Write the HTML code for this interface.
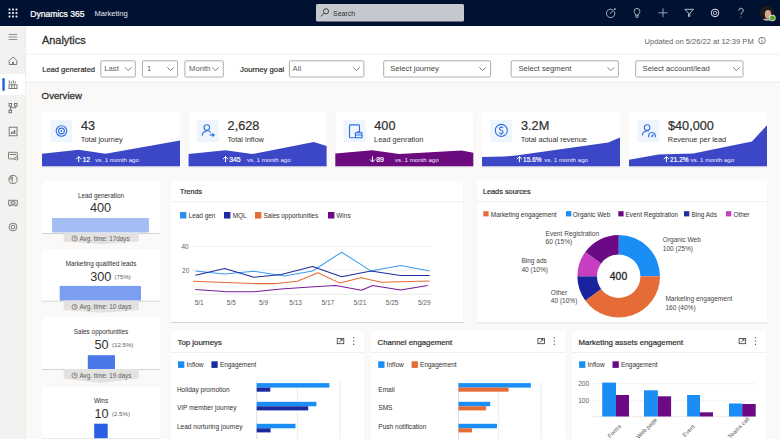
<!DOCTYPE html><html><head><meta charset="utf-8"><style>html,body{margin:0;padding:0;background:#faf9f8;overflow:hidden}svg{display:block;font-family:"Liberation Sans", sans-serif}</style></head><body>
<svg width="780" height="439" viewBox="0 0 780 439">
<defs><filter id="sh" x="-10%" y="-10%" width="120%" height="130%"><feDropShadow dx="0" dy="0.7" stdDeviation="0.55" flood-color="#000" flood-opacity="0.22"/></filter></defs>
<rect x="0" y="0" width="780" height="439" fill="#faf9f8"/>
<rect x="0" y="0" width="780" height="26" fill="#001131"/>
<rect x="8.6" y="8.6" width="1.8" height="1.8" fill="#fff"/>
<rect x="8.6" y="12.1" width="1.8" height="1.8" fill="#fff"/>
<rect x="8.6" y="15.6" width="1.8" height="1.8" fill="#fff"/>
<rect x="12.1" y="8.6" width="1.8" height="1.8" fill="#fff"/>
<rect x="12.1" y="12.1" width="1.8" height="1.8" fill="#fff"/>
<rect x="12.1" y="15.6" width="1.8" height="1.8" fill="#fff"/>
<rect x="15.6" y="8.6" width="1.8" height="1.8" fill="#fff"/>
<rect x="15.6" y="12.1" width="1.8" height="1.8" fill="#fff"/>
<rect x="15.6" y="15.6" width="1.8" height="1.8" fill="#fff"/>
<text x="30.2" y="16.6" font-size="8.6" fill="#fff" stroke="#fff" stroke-width="0.241" text-anchor="start" >Dynamics 365</text>
<text x="94.4" y="16.4" font-size="7.6" fill="#e8e8ee" font-weight="400" text-anchor="start" >Marketing</text>
<rect x="316" y="4" width="148" height="17.5" rx="1.5" fill="#c5c8cf"/>
<circle cx="326" cy="11.3" r="2.6" fill="none" stroke="#323130" stroke-width="0.9"/><line x1="324.1" y1="13.2" x2="320.9" y2="16.4" stroke="#323130" stroke-width="0.9"/>
<text x="333" y="15.6" font-size="7.0" fill="#323130" font-weight="400" text-anchor="start" >Search</text>
<path d="M614.3 11.4 A4.2 4.2 0 1 1 612.6 9.7" fill="none" stroke="#dfe2ea" stroke-width="0.75"/><line x1="609.8" y1="13.6" x2="614.9" y2="9.1" fill="none" stroke="#dfe2ea" stroke-width="0.75"/><circle cx="615" cy="9" r="0.8" fill="#dfe2ea"/>
<path d="M634.1 11.3 a2.9 2.9 0 1 1 5.8 0 c0 1.6 -1.3 2.3 -1.6 3.8 h-2.6 c-0.3 -1.5 -1.6 -2.2 -1.6 -3.8 z" fill="none" stroke="#dfe2ea" stroke-width="0.75"/><path d="M635.9 15.1 v1.8 q0 0.5 0.5 0.5 h1.2 q0.5 0 0.5 -0.5 v-1.8" fill="none" stroke="#dfe2ea" stroke-width="0.75"/>
<line x1="658.5" y1="12.8" x2="667.5" y2="12.8" stroke="#9aa0b4" stroke-width="1"/><line x1="663" y1="8.4" x2="663" y2="17.2" stroke="#9aa0b4" stroke-width="1"/>
<path d="M684.9 9.3 H693.5 L689.9 13.2 V16.4 H688.5 V13.2 Z" fill="none" stroke="#e6e8ee" stroke-width="0.8" stroke-linejoin="round"/>
<circle cx="715" cy="12.9" r="3.8" fill="none" stroke="#dfe2ea" stroke-width="1"/><circle cx="715" cy="12.9" r="1.7" fill="none" stroke="#dfe2ea" stroke-width="0.8"/>
<path d="M738.8 10.6 c0-3 4.4-3 4.4 -0.2 c0 1.8 -2.2 2 -2.2 4" fill="none" stroke="#e6e8ee" stroke-width="0.9"/><circle cx="741" cy="17" r="0.5" fill="#e6e8ee"/>
<defs><clipPath id="av"><circle cx="767" cy="13.3" r="7.4"/></clipPath></defs><g clip-path="url(#av)"><rect x="759" y="5" width="16" height="17" fill="#1f1a19"/><ellipse cx="768" cy="14.2" rx="3.2" ry="4.3" fill="#d4a592"/><path d="M764.5 12 q2 -4 6 -2.5 q-1 -2.5 -3.5 -2.5 q-3 0.5 -2.5 5z" fill="#1f1a19"/><ellipse cx="767" cy="21.3" rx="5.5" ry="2.8" fill="#b9b6b8"/></g><circle cx="772.3" cy="18" r="3.3" fill="#e8e8e8"/><circle cx="772.3" cy="18" r="2.5" fill="#52a82a"/>
<rect x="0" y="26" width="25.6" height="413" fill="#f3f2f1"/>
<rect x="25.3" y="26" width="0.6" height="413" fill="#e4e2e0"/>
<rect x="0" y="74" width="25.3" height="21" fill="#ffffff"/>
<rect x="2.3" y="78" width="2.5" height="13" rx="1.2" fill="#2266e3"/>
<line x1="8.6" y1="34.5" x2="17.2" y2="34.5" stroke="#8a8886" stroke-width="0.9"/>
<line x1="8.6" y1="37" x2="17.2" y2="37" stroke="#8a8886" stroke-width="0.9"/>
<line x1="8.6" y1="39.5" x2="17.2" y2="39.5" stroke="#8a8886" stroke-width="0.9"/>
<path d="M9.2 60.5 L13 57 L16.8 60.5 V64.5 H9.2 Z" fill="none" stroke="#605e5c" stroke-width="0.8"/><rect x="12.2" y="61.8" width="1.6" height="2.7" fill="#605e5c"/>
<path d="M9.3 80.3 v3.3 M11.3 81.3 v2.3 M13.3 80.3 v3.3 M15.3 81.3 v2.3" fill="none" stroke="#605e5c" stroke-width="0.8"/><rect x="9" y="84.8" width="8" height="3.8" fill="none" stroke="#605e5c" stroke-width="0.8"/><line x1="11.7" y1="84.8" x2="11.7" y2="88.6" fill="none" stroke="#605e5c" stroke-width="0.8"/><line x1="14.3" y1="84.8" x2="14.3" y2="88.6" fill="none" stroke="#605e5c" stroke-width="0.8"/>
<rect x="9" y="103.5" width="2.6" height="2.6" fill="none" stroke="#605e5c" stroke-width="0.8"/><rect x="14.4" y="103.5" width="2.6" height="2.6" fill="none" stroke="#605e5c" stroke-width="0.8"/><rect x="9" y="110.2" width="2.6" height="2.6" fill="none" stroke="#605e5c" stroke-width="0.8"/><path d="M10.3 106.1 v4.1 M15.7 106.1 v1.6 h-5.4" fill="none" stroke="#605e5c" stroke-width="0.8"/>
<rect x="9.2" y="127.2" width="7.8" height="8.6" fill="none" stroke="#605e5c" stroke-width="0.8"/><path d="M11.5 134 v-2 M13.1 134 v-3 M14.7 134 v-4" stroke="#605e5c" stroke-width="1"/>
<rect x="8.5" y="152.3" width="8.8" height="6.6" rx="0.6" fill="none" stroke="#605e5c" stroke-width="0.8"/><line x1="9.8" y1="154.5" x2="16" y2="154.5" fill="none" stroke="#605e5c" stroke-width="0.8"/><circle cx="16.3" cy="158.5" r="1.5" fill="#f3f2f1" stroke="#605e5c" stroke-width="0.8"/>
<circle cx="13" cy="179.5" r="4.1" fill="none" stroke="#605e5c" stroke-width="0.8"/><path d="M11.5 175.8 q1.6 1.6 0.8 3.4 q-0.8 1.6 0.6 3 M9.2 179 q1.5 -0.5 3 0.2" fill="none" stroke="#605e5c" stroke-width="0.8"/><path d="M13 175.4 a4.1 4.1 0 0 0 -3.9 3.2 q1.7 -0.3 3.2 0.4 q0.6 -1.8 -0.6 -3.4z" fill="#a19f9d"/>
<path d="M8.7 200.3 h8.6 v4.9 h-1.4 v1.4 M8.7 200.3 v4.9 h1.4 v1.4 M10.1 205.2 h5.8" fill="none" stroke="#605e5c" stroke-width="0.8"/><path d="M11 201.8 h4 v1.8 q-2 1.4 -4 0 z" fill="none" stroke="#605e5c" stroke-width="0.8"/>
<circle cx="13" cy="227" r="3.9" fill="none" stroke="#605e5c" stroke-width="0.8"/><circle cx="13" cy="227" r="1.9" fill="none" stroke="#605e5c" stroke-width="0.8"/>
<rect x="26" y="26" width="754" height="56" fill="#ffffff"/>
<rect x="26" y="53.8" width="754" height="0.8" fill="#edebe9"/>
<rect x="26" y="81.6" width="754" height="0.8" fill="#e8e6e4"/>
<text x="42.0" y="44.3" font-size="10.9" fill="#323130" stroke="#323130" stroke-width="0.305" text-anchor="start" >Analytics</text>
<text x="644.6" y="43.8" font-size="7.55" fill="#605e5c" font-weight="400" text-anchor="start" >Updated on 5/26/22 at 12:39 PM</text>
<circle cx="762" cy="40.6" r="3.3" fill="none" stroke="#605e5c" stroke-width="0.8"/><line x1="762" y1="39.8" x2="762" y2="42.6" stroke="#605e5c" stroke-width="0.8"/><circle cx="762" cy="38.5" r="0.45" fill="#605e5c"/>
<text x="42.2" y="71.6" font-size="7.55" fill="#323130" stroke="#323130" stroke-width="0.211" text-anchor="start" >Lead generated</text>
<text x="240.1" y="71.6" font-size="7.7" fill="#323130" stroke="#323130" stroke-width="0.216" text-anchor="start" >Journey goal</text>
<rect x="100.80000000000001" y="60.8" width="34.499999999999986" height="16.2" rx="1.2" fill="#fff" stroke="#a19f9d" stroke-width="0.85"/>
<text x="104.3" y="71.4" font-size="7.7" fill="#605e5c" font-weight="400" text-anchor="start" >Last</text>
<path d="M124.89999999999999 67.3 L128.2 70.6 L131.5 67.3" fill="none" stroke="#605e5c" stroke-width="0.8"/>
<rect x="142.4" y="60.8" width="35.2" height="16.2" rx="1.2" fill="#fff" stroke="#a19f9d" stroke-width="0.85"/>
<text x="147.0" y="71.4" font-size="7.7" fill="#605e5c" font-weight="400" text-anchor="start" >1</text>
<path d="M167.29999999999998 67.3 L170.6 70.6 L173.9 67.3" fill="none" stroke="#605e5c" stroke-width="0.8"/>
<rect x="184.9" y="60.8" width="38.39999999999999" height="16.2" rx="1.2" fill="#fff" stroke="#a19f9d" stroke-width="0.85"/>
<text x="189.0" y="71.4" font-size="7.7" fill="#605e5c" font-weight="400" text-anchor="start" >Month</text>
<path d="M212.0 67.3 L215.3 70.6 L218.60000000000002 67.3" fill="none" stroke="#605e5c" stroke-width="0.8"/>
<rect x="289.4" y="60.8" width="74.50000000000001" height="16.2" rx="1.2" fill="#fff" stroke="#a19f9d" stroke-width="0.85"/>
<text x="292.6" y="71.4" font-size="7.7" fill="#605e5c" font-weight="400" text-anchor="start" >All</text>
<path d="M353.09999999999997 67.3 L356.4 70.6 L359.7 67.3" fill="none" stroke="#605e5c" stroke-width="0.8"/>
<rect x="383.7" y="60.8" width="106.89999999999999" height="16.2" rx="1.2" fill="#fff" stroke="#a19f9d" stroke-width="0.85"/>
<text x="390.2" y="71.4" font-size="7.7" fill="#484644" font-weight="400" text-anchor="start" >Select journey</text>
<path d="M479.3 67.3 L482.6 70.6 L485.90000000000003 67.3" fill="none" stroke="#605e5c" stroke-width="0.8"/>
<rect x="511.2" y="60.8" width="107.19999999999995" height="16.2" rx="1.2" fill="#fff" stroke="#a19f9d" stroke-width="0.85"/>
<text x="518.4" y="71.4" font-size="7.7" fill="#484644" font-weight="400" text-anchor="start" >Select segment</text>
<path d="M607.5 67.3 L610.8 70.6 L614.0999999999999 67.3" fill="none" stroke="#605e5c" stroke-width="0.8"/>
<rect x="635.6999999999999" y="60.8" width="107.30000000000003" height="16.2" rx="1.2" fill="#fff" stroke="#a19f9d" stroke-width="0.85"/>
<text x="642.6" y="71.4" font-size="7.7" fill="#484644" font-weight="400" text-anchor="start" >Select account/lead</text>
<path d="M733.2 67.3 L736.5 70.6 L739.8 67.3" fill="none" stroke="#605e5c" stroke-width="0.8"/>
<text x="41.6" y="99.2" font-size="9.7" fill="#323130" stroke="#323130" stroke-width="0.272" text-anchor="start" >Overview</text>
<rect x="42" y="112" width="138" height="54.3" fill="#fff" filter="url(#sh)"/>
<rect x="50.3" y="120" width="22" height="22" fill="#eff5fd"/>
<polygon points="42.0,166.3 42.0,153.7 78.7,149.7 105.5,153.7 180.0,140.4 180.0,166.3" fill="#3b47c6"/>
<text x="81.0" y="130.3" font-size="12.7" fill="#323130" stroke="#323130" stroke-width="0.229" text-anchor="start" >43</text>
<text x="80.8" y="141.8" font-size="7.4" fill="#323130" font-weight="400" text-anchor="start" >Total journey</text>
<path d="M78.7 162.2 V156.6 M76.10000000000001 159.2 L78.7 156.6 L81.3 159.2" fill="none" stroke="#fff" stroke-width="1"/>
<text x="82.4" y="161.8" font-size="6.9" fill="#fff" stroke="#fff" stroke-width="0.193" text-anchor="start" >12</text>
<text x="95.2" y="161.8" font-size="6.15" fill="#eef0ff" font-weight="400" text-anchor="start" >vs. 1 month ago</text>
<rect x="188.6" y="112" width="138" height="54.3" fill="#fff" filter="url(#sh)"/>
<rect x="196.9" y="120" width="22" height="22" fill="#eff5fd"/>
<polygon points="188.6,166.3 188.6,154 225.4,150.2 252.3,154 313.8,141.9 326.6,146 326.6,166.3" fill="#3b47c6"/>
<text x="227.6" y="130.3" font-size="12.7" fill="#323130" stroke="#323130" stroke-width="0.229" text-anchor="start" >2,628</text>
<text x="227.39999999999998" y="141.8" font-size="7.4" fill="#323130" font-weight="400" text-anchor="start" >Total inflow</text>
<path d="M225.5 162.2 V156.6 M222.9 159.2 L225.5 156.6 L228.1 159.2" fill="none" stroke="#fff" stroke-width="1"/>
<text x="229.2" y="161.8" font-size="6.9" fill="#fff" stroke="#fff" stroke-width="0.193" text-anchor="start" >345</text>
<text x="247" y="161.8" font-size="6.15" fill="#eef0ff" font-weight="400" text-anchor="start" >vs. 1 month ago</text>
<rect x="335.3" y="112" width="138" height="54.3" fill="#fff" filter="url(#sh)"/>
<rect x="343.6" y="120" width="22" height="22" fill="#eff5fd"/>
<polygon points="335.3,166.3 335.3,153.5 372.3,150.2 399.2,154 461.7,150.6 473.3,152.7 473.3,166.3" fill="#6c0a80"/>
<text x="374.3" y="130.3" font-size="12.7" fill="#323130" stroke="#323130" stroke-width="0.229" text-anchor="start" >400</text>
<text x="374.1" y="141.8" font-size="7.4" fill="#323130" font-weight="400" text-anchor="start" >Lead genration</text>
<path d="M372.5 156.4 V162 M369.9 159.4 L372.5 162 L375.1 159.4" fill="none" stroke="#fff" stroke-width="1"/>
<text x="376.2" y="161.8" font-size="6.9" fill="#fff" stroke="#fff" stroke-width="0.193" text-anchor="start" >89</text>
<text x="395" y="161.8" font-size="6.15" fill="#eef0ff" font-weight="400" text-anchor="start" >vs. 1 month ago</text>
<rect x="482" y="112" width="138" height="54.3" fill="#fff" filter="url(#sh)"/>
<rect x="490.3" y="120" width="22" height="22" fill="#eff5fd"/>
<polygon points="482.0,166.3 482.0,157 504.0,156.6 516.0,155.6 608.3,142.6 620.0,137.5 620.0,166.3" fill="#3b47c6"/>
<text x="521.0" y="130.3" font-size="12.7" fill="#323130" stroke="#323130" stroke-width="0.229" text-anchor="start" >3.2M</text>
<text x="520.8" y="141.8" font-size="7.4" fill="#323130" font-weight="400" text-anchor="start" >Total actual revenue</text>
<path d="M519.4 162.2 V156.6 M516.8 159.2 L519.4 156.6 L522.0 159.2" fill="none" stroke="#fff" stroke-width="1"/>
<text x="523.1" y="161.8" font-size="6.5" fill="#fff" stroke="#fff" stroke-width="0.182" text-anchor="start" >15.6%</text>
<text x="544.3" y="161.8" font-size="6.15" fill="#eef0ff" font-weight="400" text-anchor="start" >vs. 1 month ago</text>
<rect x="629" y="112" width="138" height="54.3" fill="#fff" filter="url(#sh)"/>
<rect x="637.3" y="120" width="22" height="22" fill="#eff5fd"/>
<polygon points="629.0,166.3 629.0,159.8 658.6,154.6 693.2,153.5 751.9,141.5 767.0,125.2 767.0,166.3" fill="#3b47c6"/>
<text x="668.0" y="130.3" font-size="12.7" fill="#323130" stroke="#323130" stroke-width="0.229" text-anchor="start" >$40,000</text>
<text x="667.8" y="141.8" font-size="7.4" fill="#323130" font-weight="400" text-anchor="start" >Revenue per lead</text>
<path d="M666.4 162.2 V156.6 M663.8 159.2 L666.4 156.6 L669.0 159.2" fill="none" stroke="#fff" stroke-width="1"/>
<text x="670.1" y="161.8" font-size="6.5" fill="#fff" stroke="#fff" stroke-width="0.182" text-anchor="start" >21.2%</text>
<text x="690.5" y="161.8" font-size="6.15" fill="#eef0ff" font-weight="400" text-anchor="start" >vs. 1 month ago</text>
<circle cx="61.5" cy="131" r="5.3" fill="none" stroke="#2f6fe6" stroke-width="1.1"/><circle cx="61.5" cy="131" r="2.9" fill="none" stroke="#2f6fe6" stroke-width="1.1"/><circle cx="61.5" cy="131" r="0.9" fill="#2f6fe6"/>
<circle cx="206.8" cy="127.6" r="2.8" fill="none" stroke="#2f6fe6" stroke-width="1.1"/><path d="M202.2 135.6 a5 5 0 0 1 8.6 -3.2" fill="none" stroke="#2f6fe6" stroke-width="1.1"/><path d="M209.6 134.9 h4.4 M212.4 133.3 l1.8 1.6 l-1.8 1.6" fill="none" stroke="#2f6fe6" stroke-width="1.1"/>
<path d="M355 137.7 h-4.7 a0.8 0.8 0 0 1 -0.8 -0.8 v-11.2 a0.8 0.8 0 0 1 0.8 -0.8 h8.4 a0.8 0.8 0 0 1 0.8 0.8 v6" fill="none" stroke="#2f6fe6" stroke-width="1.1"/><rect x="355.4" y="132.8" width="6.6" height="4.9" fill="none" stroke="#2f6fe6" stroke-width="1.1"/><path d="M357.6 132.8 v-1.1 h2.2 v1.1 M355.4 135 h6.6" fill="none" stroke="#2f6fe6" stroke-width="1.1"/>
<circle cx="501.3" cy="130.4" r="6.0" fill="none" stroke="#2f6fe6" stroke-width="1.1"/><path d="M503 127.9 c-0.5 -0.9 -3.6 -1.1 -3.6 0.8 c0 2 3.7 1.2 3.7 3.3 c0 1.9 -3.3 1.6 -3.9 0.7 M501.3 126 v1 M501.3 133.7 v1" fill="none" stroke="#2f6fe6" stroke-width="1.1"/>
<circle cx="647.1" cy="127.5" r="2.8" fill="none" stroke="#2f6fe6" stroke-width="1.1"/><path d="M642.2 135.4 a5 5 0 0 1 6.6 -4.1" fill="none" stroke="#2f6fe6" stroke-width="1.1"/><path d="M649 137.5 a3.4 3.4 0 1 1 6 0" fill="none" stroke="#2f6fe6" stroke-width="1.1"/><path d="M652 136.2 l1.6 -1.8" fill="none" stroke="#2f6fe6" stroke-width="1.1"/><circle cx="652" cy="136.2" r="0.9" fill="#2f6fe6"/>
<rect x="42" y="181" width="118" height="52" fill="#fff" filter="url(#sh)"/>
<text x="101" y="197.5" font-size="6.4" fill="#323130" font-weight="400" text-anchor="middle" >Lead generation</text>
<text x="100.6" y="211.9" font-size="12.7" fill="#323130" font-weight="400" text-anchor="middle" >400</text>
<rect x="52" y="218" width="96.9" height="14.5" fill="#a5bdf5"/>
<rect x="42" y="249" width="118" height="51.60000000000002" fill="#fff" filter="url(#sh)"/>
<text x="101" y="266.3" font-size="6.4" fill="#323130" font-weight="400" text-anchor="middle" >Marketing qualified leads</text>
<text x="111.3" y="281.2" font-size="12.7" fill="#323130" font-weight="400" text-anchor="end" >300</text>
<text x="114.6" y="279.0" font-size="6.1" fill="#605e5c" font-weight="400" text-anchor="start" >(75%)</text>
<rect x="59.7" y="285.9" width="81.3" height="14.700000000000045" fill="#7b9ef0"/>
<rect x="42" y="316.8" width="118" height="52.19999999999999" fill="#fff" filter="url(#sh)"/>
<text x="101" y="334" font-size="6.4" fill="#323130" font-weight="400" text-anchor="middle" >Sales opportunities</text>
<text x="108.6" y="349" font-size="12.7" fill="#323130" font-weight="400" text-anchor="end" >50</text>
<text x="112.0" y="346.8" font-size="6.1" fill="#605e5c" font-weight="400" text-anchor="start" >(12.5%)</text>
<rect x="87.8" y="355.2" width="27.200000000000003" height="13.800000000000011" fill="#4a78e8"/>
<rect x="42" y="386.6" width="118" height="51.599999999999966" fill="#fff" filter="url(#sh)"/>
<text x="101" y="403" font-size="6.4" fill="#323130" font-weight="400" text-anchor="middle" >Wins</text>
<text x="108.6" y="418" font-size="12.7" fill="#323130" font-weight="400" text-anchor="end" >10</text>
<text x="112.0" y="415.8" font-size="6.1" fill="#605e5c" font-weight="400" text-anchor="start" >(2.5%)</text>
<rect x="94.2" y="423.7" width="13.5" height="14.5" fill="#2b5fe6"/>
<path d="M63.6 233 H138.8 V241.6 L101.2 244.3 L63.6 241.6 Z" fill="#e3e2e1"/>
<circle cx="74.6" cy="238.5" r="2.6" fill="none" stroke="#605e5c" stroke-width="0.65"/><path d="M74.6 236.9 v1.7 h1.2" fill="none" stroke="#605e5c" stroke-width="0.65"/>
<text x="79.4" y="240.9" font-size="6.35" fill="#605e5c" font-weight="400" text-anchor="start" >Avg. time: 17days</text>
<path d="M63.6 300.6 H138.8 V310 L101.2 312.8 L63.6 310 Z" fill="#e3e2e1"/>
<circle cx="74.6" cy="306.9" r="2.6" fill="none" stroke="#605e5c" stroke-width="0.65"/><path d="M74.6 305.3 v1.7 h1.2" fill="none" stroke="#605e5c" stroke-width="0.65"/>
<text x="79.4" y="309.3" font-size="6.35" fill="#605e5c" font-weight="400" text-anchor="start" >Avg. time: 10 days</text>
<path d="M63.6 369 H138.8 V378.6 L101.2 383 L63.6 378.6 Z" fill="#e3e2e1"/>
<circle cx="74.6" cy="375.5" r="2.6" fill="none" stroke="#605e5c" stroke-width="0.65"/><path d="M74.6 373.9 v1.7 h1.2" fill="none" stroke="#605e5c" stroke-width="0.65"/>
<text x="79.4" y="377.90000000000003" font-size="6.35" fill="#605e5c" font-weight="400" text-anchor="start" >Avg. time: 19 days</text>
<rect x="171.0" y="181.0" width="292.5" height="141.0" fill="#fff" filter="url(#sh)"/>
<text x="180.1" y="194.2" font-size="7.15" fill="#323130" stroke="#323130" stroke-width="0.200" text-anchor="start" >Trends</text>
<rect x="171.0" y="201.4" width="292.5" height="0.8" fill="#edebe9"/>
<rect x="180" y="212" width="6.4" height="6.5" fill="#2b8ef0"/>
<text x="188.6" y="217.8" font-size="6.45" fill="#323130" font-weight="400" text-anchor="start" >Lead gen</text>
<rect x="224" y="212" width="6.4" height="6.5" fill="#1c2ea0"/>
<text x="232.7" y="217.8" font-size="6.45" fill="#323130" font-weight="400" text-anchor="start" >MQL</text>
<rect x="255" y="212" width="6.4" height="6.5" fill="#e66c37"/>
<text x="263.4" y="217.8" font-size="6.45" fill="#323130" font-weight="400" text-anchor="start" >Sales opportunities</text>
<rect x="328" y="212" width="6.4" height="6.5" fill="#6b0a84"/>
<text x="336.3" y="217.8" font-size="6.45" fill="#323130" font-weight="400" text-anchor="start" >Wins</text>
<line x1="192.7" y1="246.6" x2="432" y2="246.6" stroke="#eeeeee" stroke-width="0.8"/>
<line x1="192.7" y1="270.1" x2="432" y2="270.1" stroke="#eeeeee" stroke-width="0.8"/>
<line x1="192.7" y1="294.3" x2="432" y2="294.3" stroke="#e6e6e6" stroke-width="0.8"/>
<text x="188.6" y="249.1" font-size="6.4" fill="#605e5c" font-weight="400" text-anchor="end" >40</text>
<text x="189.2" y="272.6" font-size="6.4" fill="#605e5c" font-weight="400" text-anchor="end" >20</text>
<text x="199.2" y="304.6" font-size="6.5" fill="#605e5c" font-weight="400" text-anchor="middle" >5/1</text>
<text x="231.35" y="304.6" font-size="6.5" fill="#605e5c" font-weight="400" text-anchor="middle" >5/5</text>
<text x="263.5" y="304.6" font-size="6.5" fill="#605e5c" font-weight="400" text-anchor="middle" >5/9</text>
<text x="295.65" y="304.6" font-size="6.5" fill="#605e5c" font-weight="400" text-anchor="middle" >5/13</text>
<text x="327.79999999999995" y="304.6" font-size="6.5" fill="#605e5c" font-weight="400" text-anchor="middle" >5/17</text>
<text x="359.95" y="304.6" font-size="6.5" fill="#605e5c" font-weight="400" text-anchor="middle" >5/21</text>
<text x="392.09999999999997" y="304.6" font-size="6.5" fill="#605e5c" font-weight="400" text-anchor="middle" >5/25</text>
<text x="424.25" y="304.6" font-size="6.5" fill="#605e5c" font-weight="400" text-anchor="middle" >5/29</text>
<polyline points="193,281.2 225,282.5 254,283.6 276.3,283.6 297.2,281.2 318,272.8 339.8,283.1 361,277.7 381.7,282.2 429.6,281" fill="none" stroke="#e66c37" stroke-width="1.05" stroke-linejoin="round"/>
<polyline points="195.4,289.4 224.3,291.6 254,291.8 281,288.9 310,287 335.9,285.4 361.4,290.3 372.7,285.4 400.5,289.9 427.8,285.4" fill="none" stroke="#7a1a9a" stroke-width="1.05" stroke-linejoin="round"/>
<polyline points="195.4,270.9 224.3,274.1 253.9,271.3 284.4,276.1 312.6,271 341.6,252.2 370.9,270.9 400.5,265.5 429.6,271" fill="none" stroke="#3c9bf2" stroke-width="1.05" stroke-linejoin="round"/>
<polyline points="195.4,275.3 224.7,268.4 253.9,277.3 281.2,274.5 312.6,266.4 341.6,276.8 370.9,271 400.5,275.4 429.6,275.4" fill="none" stroke="#1f2c9c" stroke-width="1.05" stroke-linejoin="round"/>
<rect x="476.8" y="180.3" width="290.6" height="142.0" fill="#fff" filter="url(#sh)"/>
<text x="482.9" y="194" font-size="7.33" fill="#323130" stroke="#323130" stroke-width="0.205" text-anchor="start" >Leads sources</text>
<rect x="476.8" y="201.3" width="290.6" height="0.8" fill="#edebe9"/>
<rect x="483.3" y="211.2" width="5.3" height="5.2" fill="#e66c37"/>
<text x="490.8" y="216.5" font-size="6.45" fill="#323130" font-weight="400" text-anchor="start" >Marketing engagement</text>
<rect x="566" y="211.2" width="5.3" height="5.2" fill="#1b8ef5"/>
<text x="572.8" y="216.5" font-size="6.45" fill="#323130" font-weight="400" text-anchor="start" >Organic Web</text>
<rect x="618.3" y="211.2" width="5.3" height="5.2" fill="#6b0a84"/>
<text x="625.5" y="216.5" font-size="6.45" fill="#323130" font-weight="400" text-anchor="start" >Event Registration</text>
<rect x="684" y="211.2" width="5.3" height="5.2" fill="#1c2ea0"/>
<text x="691.5" y="216.5" font-size="6.45" fill="#323130" font-weight="400" text-anchor="start" >Bing Ads</text>
<rect x="726" y="211.2" width="5.3" height="5.2" fill="#c83ec0"/>
<text x="733.4" y="216.5" font-size="6.45" fill="#323130" font-weight="400" text-anchor="start" >Other</text>
<path d="M618.70 234.90 A41.3 41.3 0 0 1 660.00 276.20 L640.40 276.20 A21.7 21.7 0 0 0 618.70 254.50 Z" fill="#1b8ef5"/>
<path d="M660.00 276.20 A41.3 41.3 0 0 1 585.29 300.48 L601.14 288.95 A21.7 21.7 0 0 0 640.40 276.20 Z" fill="#e66c37"/>
<path d="M585.29 300.48 A41.3 41.3 0 0 1 577.40 276.20 L597.00 276.20 A21.7 21.7 0 0 0 601.14 288.95 Z" fill="#1a239e"/>
<path d="M577.40 276.20 A41.3 41.3 0 0 1 585.29 251.92 L601.14 263.45 A21.7 21.7 0 0 0 597.00 276.20 Z" fill="#c83ec0"/>
<path d="M585.29 251.92 A41.3 41.3 0 0 1 618.70 234.90 L618.70 254.50 A21.7 21.7 0 0 0 601.14 263.45 Z" fill="#6b0a84"/>
<text x="618.5" y="279.8" font-size="10.4" fill="#252423" stroke="#252423" stroke-width="0.291" text-anchor="middle" >400</text>
<text x="545.6" y="235.6" font-size="6.55" fill="#484644" font-weight="400" text-anchor="start" >Event Registration</text>
<text x="545.6" y="244.2" font-size="6.55" fill="#484644" font-weight="400" text-anchor="start" >60 (15%)</text>
<text x="662.8" y="242.1" font-size="6.55" fill="#484644" font-weight="400" text-anchor="start" >Organic Web</text>
<text x="662.8" y="250.7" font-size="6.55" fill="#484644" font-weight="400" text-anchor="start" >100 (25%)</text>
<text x="521.4" y="263.09999999999997" font-size="6.55" fill="#484644" font-weight="400" text-anchor="start" >Bing ads</text>
<text x="521.4" y="271.7" font-size="6.55" fill="#484644" font-weight="400" text-anchor="start" >40 (10%)</text>
<text x="550.8" y="294.59999999999997" font-size="6.55" fill="#484644" font-weight="400" text-anchor="start" >Other</text>
<text x="550.8" y="303.2" font-size="6.55" fill="#484644" font-weight="400" text-anchor="start" >40 (10%)</text>
<text x="665.4" y="301.4" font-size="6.55" fill="#484644" font-weight="400" text-anchor="start" >Marketing engagement</text>
<text x="665.4" y="310.0" font-size="6.55" fill="#484644" font-weight="400" text-anchor="start" >160 (40%)</text>
<rect x="170.9" y="330.4" width="193.4" height="120" fill="#fff" filter="url(#sh)"/>
<text x="177.6" y="344.8" font-size="7.8" fill="#323130" stroke="#323130" stroke-width="0.218" text-anchor="start" >Top journeys</text>
<rect x="170.9" y="352.2" width="193.4" height="0.8" fill="#edebe9"/>
<rect x="337.2" y="338.5" width="6.6" height="5.2" fill="none" stroke="#3b3a39" stroke-width="0.8"/><path d="M338.9 342.4 L342.1 339.6 M340.4 339.5 h1.8 v1.7" fill="none" stroke="#3b3a39" stroke-width="0.75"/>
<rect x="353.0" y="337.2" width="1.2" height="1.2" fill="#605e5c"/>
<rect x="353.0" y="340.5" width="1.2" height="1.2" fill="#605e5c"/>
<rect x="353.0" y="343.8" width="1.2" height="1.2" fill="#605e5c"/>
<rect x="370.8" y="330.4" width="194.2" height="120" fill="#fff" filter="url(#sh)"/>
<text x="377.5" y="344.8" font-size="7.8" fill="#323130" stroke="#323130" stroke-width="0.218" text-anchor="start" >Channel engagement</text>
<rect x="370.8" y="352.2" width="194.2" height="0.8" fill="#edebe9"/>
<rect x="537.9" y="338.5" width="6.6" height="5.2" fill="none" stroke="#3b3a39" stroke-width="0.8"/><path d="M539.6 342.4 L542.8 339.6 M541.1 339.5 h1.8 v1.7" fill="none" stroke="#3b3a39" stroke-width="0.75"/>
<rect x="553.7" y="337.2" width="1.2" height="1.2" fill="#605e5c"/>
<rect x="553.7" y="340.5" width="1.2" height="1.2" fill="#605e5c"/>
<rect x="553.7" y="343.8" width="1.2" height="1.2" fill="#605e5c"/>
<rect x="571.9" y="330.4" width="194.30000000000007" height="120" fill="#fff" filter="url(#sh)"/>
<text x="578.6" y="344.8" font-size="7.8" fill="#323130" stroke="#323130" stroke-width="0.218" text-anchor="start" >Marketing assets engagement</text>
<rect x="571.9" y="352.2" width="194.30000000000007" height="0.8" fill="#edebe9"/>
<rect x="739.1" y="338.5" width="6.6" height="5.2" fill="none" stroke="#3b3a39" stroke-width="0.8"/><path d="M740.8 342.4 L744.0 339.6 M742.3 339.5 h1.8 v1.7" fill="none" stroke="#3b3a39" stroke-width="0.75"/>
<rect x="754.9" y="337.2" width="1.2" height="1.2" fill="#605e5c"/>
<rect x="754.9" y="340.5" width="1.2" height="1.2" fill="#605e5c"/>
<rect x="754.9" y="343.8" width="1.2" height="1.2" fill="#605e5c"/>
<rect x="178.0" y="361.3" width="6.3" height="6.6" fill="#1b8ef5"/>
<text x="186.4" y="367" font-size="6.6" fill="#323130" font-weight="400" text-anchor="start" >Inflow</text>
<rect x="211.4" y="361.3" width="6.3" height="6.6" fill="#1a2aa0"/>
<text x="219.9" y="367" font-size="6.45" fill="#323130" font-weight="400" text-anchor="start" >Engagement</text>
<rect x="378.2" y="361.3" width="6.3" height="6.6" fill="#1b8ef5"/>
<text x="386.6" y="367" font-size="6.6" fill="#323130" font-weight="400" text-anchor="start" >Inflow</text>
<rect x="411.6" y="361.3" width="6.3" height="6.6" fill="#e66c37"/>
<text x="420.1" y="367" font-size="6.45" fill="#323130" font-weight="400" text-anchor="start" >Engagement</text>
<rect x="579.1" y="361.3" width="6.3" height="6.6" fill="#1b8ef5"/>
<text x="587.5" y="367" font-size="6.6" fill="#323130" font-weight="400" text-anchor="start" >Inflow</text>
<rect x="612.5" y="361.3" width="6.3" height="6.6" fill="#6b0a84"/>
<text x="621.0" y="367" font-size="6.45" fill="#323130" font-weight="400" text-anchor="start" >Engagement</text>
<line x1="256.7" y1="381.5" x2="256.7" y2="439" stroke="#c8c6c4" stroke-width="0.6"/>
<line x1="297.4" y1="381.5" x2="297.4" y2="439" stroke="#e1dfdd" stroke-width="0.6"/>
<line x1="340.2" y1="381.5" x2="340.2" y2="439" stroke="#e1dfdd" stroke-width="0.6"/>
<rect x="256.7" y="383.1" width="72.7" height="4.5" fill="#1b8ef5"/>
<rect x="256.7" y="387.6" width="13.6" height="4.1" fill="#1a2aa0"/>
<text x="176.9" y="391.8" font-size="6.55" fill="#323130" font-weight="400" text-anchor="start" >Holiday promotion</text>
<rect x="256.7" y="401.8" width="59.7" height="4.5" fill="#1b8ef5"/>
<rect x="256.7" y="406.3" width="51.5" height="4.1" fill="#1a2aa0"/>
<text x="176.9" y="410.2" font-size="6.55" fill="#323130" font-weight="400" text-anchor="start" >VIP member journey</text>
<rect x="256.7" y="423.8" width="38.8" height="4.5" fill="#1b8ef5"/>
<rect x="256.7" y="428.3" width="13.9" height="4.1" fill="#1a2aa0"/>
<text x="176.9" y="428.6" font-size="6.55" fill="#323130" font-weight="400" text-anchor="start" >Lead nurturing journey</text>
<line x1="458.5" y1="381.5" x2="458.5" y2="439" stroke="#c8c6c4" stroke-width="0.6"/>
<line x1="498.6" y1="381.5" x2="498.6" y2="439" stroke="#e1dfdd" stroke-width="0.6"/>
<line x1="541.2" y1="381.5" x2="541.2" y2="439" stroke="#e1dfdd" stroke-width="0.6"/>
<rect x="458.5" y="383.1" width="72.4" height="4.5" fill="#1b8ef5"/>
<rect x="458.5" y="387.6" width="50.1" height="4.1" fill="#e66c37"/>
<text x="378.3" y="391.8" font-size="6.55" fill="#323130" font-weight="400" text-anchor="start" >Email</text>
<rect x="458.5" y="401.8" width="31.7" height="4.5" fill="#1b8ef5"/>
<rect x="458.5" y="406.3" width="27.6" height="4.1" fill="#e66c37"/>
<text x="378.3" y="410.2" font-size="6.55" fill="#323130" font-weight="400" text-anchor="start" >SMS</text>
<rect x="458.5" y="423.8" width="38.5" height="4.5" fill="#1b8ef5"/>
<rect x="458.5" y="428.3" width="13.5" height="4.1" fill="#e66c37"/>
<text x="378.3" y="428.6" font-size="6.55" fill="#323130" font-weight="400" text-anchor="start" >Push notification</text>
<line x1="592.6" y1="383.6" x2="755.2" y2="383.6" stroke="#eeeeee" stroke-width="0.7"/>
<line x1="592.6" y1="400.7" x2="755.2" y2="400.7" stroke="#eeeeee" stroke-width="0.7"/>
<line x1="592.6" y1="416.6" x2="755.2" y2="416.6" stroke="#e1dfdd" stroke-width="0.6"/>
<text x="589.3" y="386" font-size="6.7" fill="#605e5c" font-weight="400" text-anchor="end" >200</text>
<text x="589.3" y="403.1" font-size="6.7" fill="#605e5c" font-weight="400" text-anchor="end" >100</text>
<rect x="602.2" y="382.6" width="13.8" height="33.9" fill="#1b8ef5"/>
<rect x="616" y="395" width="13.0" height="21.5" fill="#6b0a84"/>
<rect x="644" y="390.3" width="13.9" height="26.2" fill="#1b8ef5"/>
<rect x="657.9" y="396.3" width="13.2" height="20.2" fill="#6b0a84"/>
<rect x="687.1" y="395" width="12.9" height="21.5" fill="#1b8ef5"/>
<rect x="700" y="412.3" width="13.0" height="4.2" fill="#6b0a84"/>
<rect x="729" y="403.5" width="13.2" height="13.0" fill="#1b8ef5"/>
<rect x="742.2" y="404" width="13.5" height="12.5" fill="#6b0a84"/>
<text x="615.7" y="432.5" font-size="5.8" fill="#605e5c" text-anchor="middle" transform="rotate(-45 615.7 432.5)">Forms</text>
<text x="648.1" y="429.6" font-size="5.8" fill="#605e5c" text-anchor="middle" transform="rotate(-45 648.1 429.6)">Web page</text>
<text x="690" y="432.1" font-size="5.8" fill="#605e5c" text-anchor="middle" transform="rotate(-45 690 432.1)">Event</text>
<text x="740" y="429.2" font-size="5.8" fill="#605e5c" text-anchor="middle" transform="rotate(-45 740 429.2)">Teams call</text>
</svg></body></html>
